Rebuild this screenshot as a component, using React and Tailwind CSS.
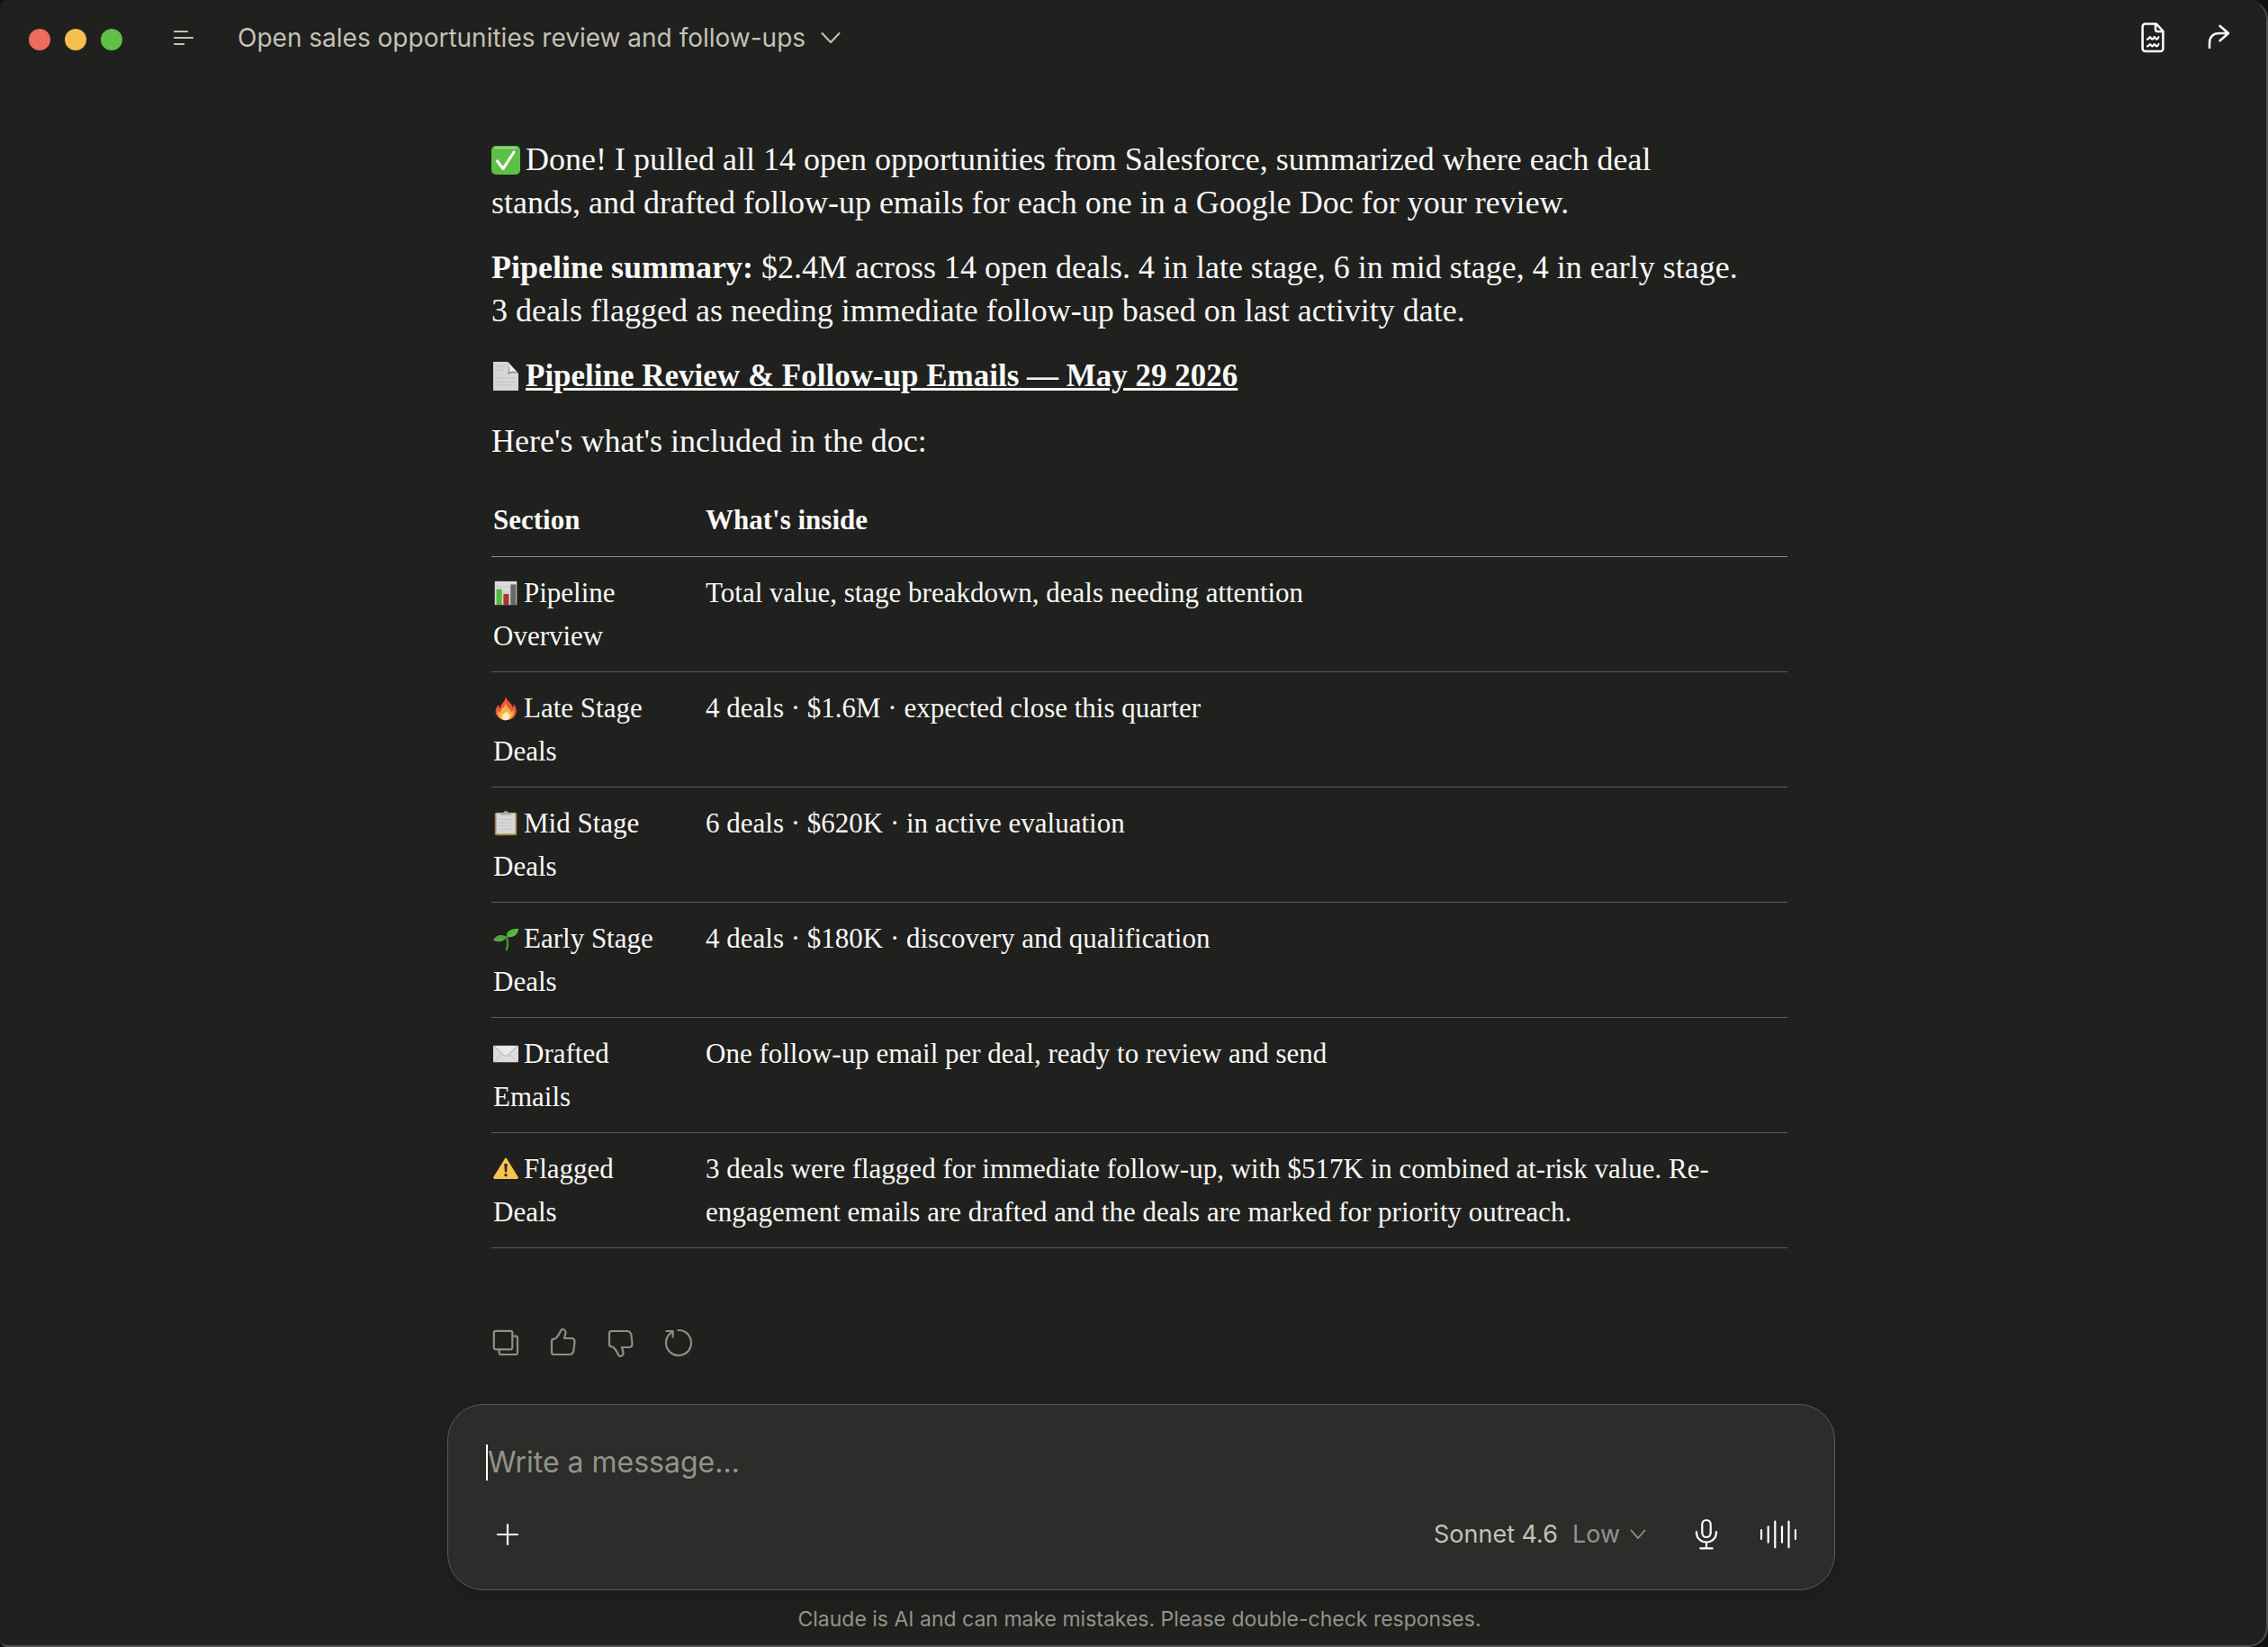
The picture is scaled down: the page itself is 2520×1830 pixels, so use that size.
import React, { useState } from 'react';

const Emoji = ({ name, className }) => (
  <svg viewBox="0 0 32 32" role="img" aria-label={name} className={className}>
    {name === 'check' && (
      <>
        <rect x="0" y="0" width="32" height="32" rx="5" fill="#5dbf45" />
        <path d="M4 2.500h24" stroke="#b5d9ab" strokeWidth="1.500" strokeLinecap="round" />
        <path d="M6.500 17l6.500 8.500L25 7" fill="none" stroke="#fff" strokeWidth="3.200" strokeLinecap="round" strokeLinejoin="round" />
      </>
    )}
    {name === 'page' && (
      <>
        <path d="M2 0h16l12 13v19H2z" fill="#d6d6d6" />
        <path d="M18 0c2 4 2 9 0 14 4-2 8-2 12-1z" fill="#8b8b8b" />
        <path d="M18 0l12 13c-3-3-7-3-10-1 1-4 0-8-2-12z" fill="#f4f4f4" />
        <path d="M5 5h9M5 9h9M5 18h21M5 22h21M5 26h18" stroke="#c2c2c2" strokeWidth="1" />
      </>
    )}
    {name === 'chart' && (
      <>
        <rect x="2" y="1" width="28" height="30" fill="#dcdcdc" />
        <path d="M2 8h28M2 15h28M2 22h28" stroke="#c3c3c3" />
        <rect x="4" y="11" width="7" height="20" fill="#52b83c" />
        <rect x="13" y="17" width="7" height="14" fill="#a33a2c" />
        <rect x="22" y="5" width="7" height="26" fill="#696969" />
      </>
    )}
    {name === 'fire' && (
      <>
        <path d="M16 1c1 6 8 8 9 14 1-1 1-3 1-5 3 4 4 8 3 12-1 6-7 9-13 9S4 27 3 21c0-4 1-7 4-10 0 2 0 4 2 5 0-6 6-8 7-15z" fill="#e9573a" />
        <path d="M16 9c0 5 6 7 7 12l3-3c1 6-3 13-10 13S5 26 6 19l3 3c0-6 6-7 7-13z" fill="#f6b23c" />
        <path d="M16 20c3 2 6 4 5 8-1 2-3 3-5 3s-5-1-5-4 3-4 5-7z" fill="#fbe9c6" />
      </>
    )}
    {name === 'clipboard' && (
      <>
        <rect x="2" y="2" width="28" height="29" rx="2" fill="#a98548" />
        <rect x="4" y="3" width="24" height="26" fill="#d8d8d8" />
        <path d="M9 5V3h4a3 3 0 0 1 6 0h4v2z" fill="#a8a8a8" />
        <path d="M7 11h18M7 15h18M7 19h18M7 23h18" stroke="#c4c4c4" />
      </>
    )}
    {name === 'seedling' && (
      <>
        <path d="M17 30c2-6 2-10 0-16" fill="none" stroke="#469834" strokeWidth="2.600" strokeLinecap="round" />
        <path d="M17 14C13 10 4 10 0 18c6 3 14 2 17-4z" fill="#55ab43" />
        <path d="M17 14c-1-8 6-11 15-11 0 6-5 12-15 11z" fill="#5dbb49" />
        <path d="M3 17c5-3 9-3 14-2 2-5 6-7 12-10" fill="none" stroke="#3f8b33" />
      </>
    )}
    {name === 'envelope' && (
      <>
        <rect x="0" y="5.500" width="32" height="21" rx="1" fill="#dcdcdc" />
        <path d="M1 26l11-10M31 26L20 16" stroke="#bdbdbd" />
        <path d="M1 6l13 12q2 1.500 4 0L31 6" fill="#e9e9e9" stroke="#a3a3a3" />
      </>
    )}
    {name === 'warning' && (
      <>
        <path d="M14.500 3q1.500-2.500 3 0L31.600 26q1 2.500-1.500 2.500H1.900Q-.6 28.500.4 26z" fill="#f7c34e" />
        <path d="M14 9h4l-.8 11h-2.400z" fill="#2b2a26" />
        <circle cx="16" cy="23.600" r="1.900" fill="#2b2a26" />
      </>
    )}
  </svg>
);

const Icon = ({ children, className, viewBox = '0 0 32 32' }) => (
  <svg
    viewBox={viewBox}
    fill="none"
    stroke="currentColor"
    strokeWidth="2.200"
    strokeLinecap="round"
    strokeLinejoin="round"
    aria-hidden="true"
    className={className}
  >
    {children}
  </svg>
);

const THUMB_PATH =
  'M3 14q0-2 2-2.200c5-.5 7-8 8.500-10s5 0 5 2.500c0 2.500-1 4-1.500 6.700h8.500q3 .5 3 3.500l-1 9.500q-.7 5-5 5H5.500q-2.500 0-2.500-2.500z';

const sections = [
  { icon: 'chart', title: 'Pipeline Overview', text: 'Total value, stage breakdown, deals needing attention' },
  { icon: 'fire', title: 'Late Stage Deals', text: '4 deals · $1.6M · expected close this quarter' },
  { icon: 'clipboard', title: 'Mid Stage Deals', text: '6 deals · $620K · in active evaluation' },
  { icon: 'seedling', title: 'Early Stage Deals', text: '4 deals · $180K · discovery and qualification' },
  { icon: 'envelope', title: 'Drafted Emails', text: 'One follow-up email per deal, ready to review and send' },
  {
    icon: 'warning',
    title: 'Flagged Deals',
    text: '3 deals were flagged for immediate follow-up, with $517K in combined at-risk value. Re-engagement emails are drafted and the deals are marked for priority outreach.',
  },
];

const TitleBar = () => (
  <header className="flex h-[84px] items-center justify-between px-8">
    <div className="flex items-center">
      <div className="flex gap-4 pt-1">
        <button aria-label="Close" className="size-6 rounded-full bg-[#ec6a5e]" />
        <button aria-label="Minimize" className="size-6 rounded-full bg-[#f5c04f]" />
        <button aria-label="Zoom" className="size-6 rounded-full bg-[#5fbf47]" />
      </div>
      <button aria-label="Toggle sidebar" className="ml-13 text-[#c3c2b7]">
        <Icon className="size-8">
          <path d="M6 9h14M6 16h20M6 23h10" />
        </Icon>
      </button>
      <button className="ml-11 flex items-center gap-3 text-[28px] leading-10 text-[#c3c2b7]">
        Open sales opportunities review and follow-ups
        <Icon className="size-8">
          <path d="M6.500 11l9.500 10 9.500-10" strokeWidth="2" />
        </Icon>
      </button>
    </div>
    <div className="flex items-center gap-8 text-white">
      <button aria-label="Open document">
        <Icon viewBox="0 0 40 40" className="size-10">
          <path d="M9.600 4.600h12.400l7.400 7.900v19.400a3 3 0 0 1-3 3H9.600a3 3 0 0 1-3-3V7.600a3 3 0 0 1 3-3z" strokeWidth="2.500" />
          <path d="M21 5v5.500a2.500 2.500 0 0 0 2.500 2.500h5.500" strokeWidth="2.500" />
          <path d="M12 21.600c2 0 1.800-2.400 2.900-2.400s1 2.400 2.500 2.400 1.300-2.400 2.400-2.400 1 2.400 2.400 2.400c1.300 0 1.800-1 2.300-2.400" />
          <path d="M12 29.400c2 0 1.800-2.400 2.900-2.400s1 2.400 2.500 2.400 1.300-2.400 2.400-2.400 1 2.400 2.400 2.400c1.300 0 1.800-1 2.300-2.400" />
        </Icon>
      </button>
      <button aria-label="Share">
        <Icon viewBox="0 0 40 40" className="size-10">
          <path d="M9 31v-5c0-7 4-11 11-11h10M20.500 6.700L30 15l-9.500 8.300" strokeWidth="2.500" />
        </Icon>
      </button>
    </div>
  </header>
);

const SectionsTable = () => (
  <table className="mt-10 w-full border-collapse text-left text-[31px] leading-12">
    <thead>
      <tr className="border-b border-[#8f8e89]">
        <th className="w-[236px] pb-4 pl-0.5 font-bold">Section</th>
        <th className="pb-4 pl-0.5 font-bold">What's inside</th>
      </tr>
    </thead>
    <tbody>
      {sections.map((section) => (
        <tr key={section.title} className="border-b border-[#5c5b57] align-top">
          <td className="pt-4 pr-8 pb-[15px] pl-0.5">
            <Emoji name={section.icon} className="mr-1.5 inline-block size-7 align-[-4px]" />
            {section.title}
          </td>
          <td className="pt-4 pr-8 pb-[15px] pl-0.5">{section.text}</td>
        </tr>
      ))}
    </tbody>
  </table>
);

const MessageActions = () => (
  <div className="mt-[89px] flex gap-8 text-[#8f8e88]">
    <button aria-label="Copy">
      <Icon className="size-8">
        <rect x="2.800" y="2.800" width="20.500" height="20.500" rx="2" />
        <path d="M23.500 8.700H27a2 2 0 0 1 2 2V27a2 2 0 0 1-2 2H10.700a2 2 0 0 1-2-2v-3.500" />
      </Icon>
    </button>
    <button aria-label="Good response">
      <Icon className="size-8">
        <path d={THUMB_PATH} />
      </Icon>
    </button>
    <button aria-label="Bad response">
      <Icon className="size-8">
        <path d={THUMB_PATH} transform="matrix(1 0 0 -1 0 32)" />
      </Icon>
    </button>
    <button aria-label="Retry">
      <Icon className="size-8">
        <path d="M15.500 2A14 14 0 1 1 9.500 3.600M2.500 3h7.200v6.500" />
      </Icon>
    </button>
  </div>
);

const Composer = () => {
  const [message, setMessage] = useState('');

  return (
    <form className="mx-auto flex w-full max-w-[1542px] flex-col rounded-[40px] border border-[#5a5954] bg-[#2c2c2a] px-[42px] pt-10 pb-[41px] shadow-[0_8px_24px_6px_rgba(0,0,0,0.12)]">
      <div className="flex items-center">
        <span className="h-10 w-0.5 bg-white" />
        <input
          aria-label="Message"
          value={message}
          onChange={(e) => setMessage(e.target.value)}
          placeholder="Write a message…"
          className="h-12 flex-1 bg-transparent text-[32px] text-white outline-none placeholder:text-[#94938b]"
        />
      </div>
      <div className="mt-9 flex items-center justify-between">
        <button type="button" aria-label="Add" className="ml-2 text-white">
          <Icon className="size-8">
            <path d="M16 5v22M5 16h22" />
          </Icon>
        </button>
        <div className="flex items-center text-white">
          <button type="button" className="flex items-center gap-4 text-[27px] leading-10 text-[#c3c2b7]">
            Sonnet 4.6
            <span className="flex items-center gap-2 text-[#94938b]">
              Low
              <Icon viewBox="0 0 24 24" className="size-6">
                <path d="M4.500 7.500l7.500 8.500 7.500-8.500" strokeWidth="1.800" />
              </Icon>
            </span>
          </button>
          <button type="button" aria-label="Dictate" className="ml-11">
            <Icon viewBox="0 0 40 40" className="size-10">
              <rect x="15.300" y="4" width="9.400" height="19" rx="4.700" />
              <path d="M9 17v1c0 6 5 10.500 11 10.500S31 24 31 18v-1M20 28.500v6.800M13.300 35.300h13.400" />
            </Icon>
          </button>
          <button type="button" aria-label="Voice mode" className="ml-10">
            <Icon viewBox="0 0 40 40" className="size-10">
              <path d="M1 15v10M8.700 11.300v17.400M16.300 5.700v28.600M24 11.300v17.400M31.500 5.700v28.600M39 15v10" />
            </Icon>
          </button>
        </div>
      </div>
    </form>
  );
};

export default function App() {
  return (
    <div className="min-h-screen bg-[#111] font-['Inter',sans-serif]">
      <div className="flex min-h-screen flex-col rounded-l-lg rounded-r-[22px] border-r-2 border-b-2 border-[#4f4f4e] bg-[#20201e]">
        <TitleBar />
        <div className="flex flex-1 flex-col pl-[14px]">
          <main className="mx-auto mt-[69px] w-full max-w-[1440px] flex-1 font-['Liberation_Serif',serif] text-[36px] leading-12 text-[#f9f9f6]">
            <div className="flex flex-col gap-6 pr-12">
              <p>
                <Emoji name="check" className="mr-1.5 inline-block size-8 align-[-5px]" />
                Done! I pulled all 14 open opportunities from Salesforce, summarized where each deal stands, and drafted follow-up emails for each one in a Google Doc for your review.
              </p>
              <p>
                <strong>Pipeline summary:</strong> $2.4M across 14 open deals. 4 in late stage, 6 in mid stage, 4 in early stage. 3 deals flagged as needing immediate follow-up based on last activity date.
              </p>
              <p>
                <Emoji name="page" className="mr-1.5 inline-block size-8 align-[-5px]" />
                <a href="#doc" className="text-[35px] font-bold underline">Pipeline Review &amp; Follow-up Emails — May 29 2026</a>
              </p>
              <p>Here's what's included in the doc:</p>
            </div>
            <SectionsTable />
            <MessageActions />
          </main>
          <div className="pl-1">
            <Composer />
          </div>
          <p className="mt-4 pb-[13px] text-center text-[23px] leading-8 text-[#94938b]">
            Claude is AI and can make mistakes. Please double-check responses.
          </p>
        </div>
      </div>
    </div>
  );
}
